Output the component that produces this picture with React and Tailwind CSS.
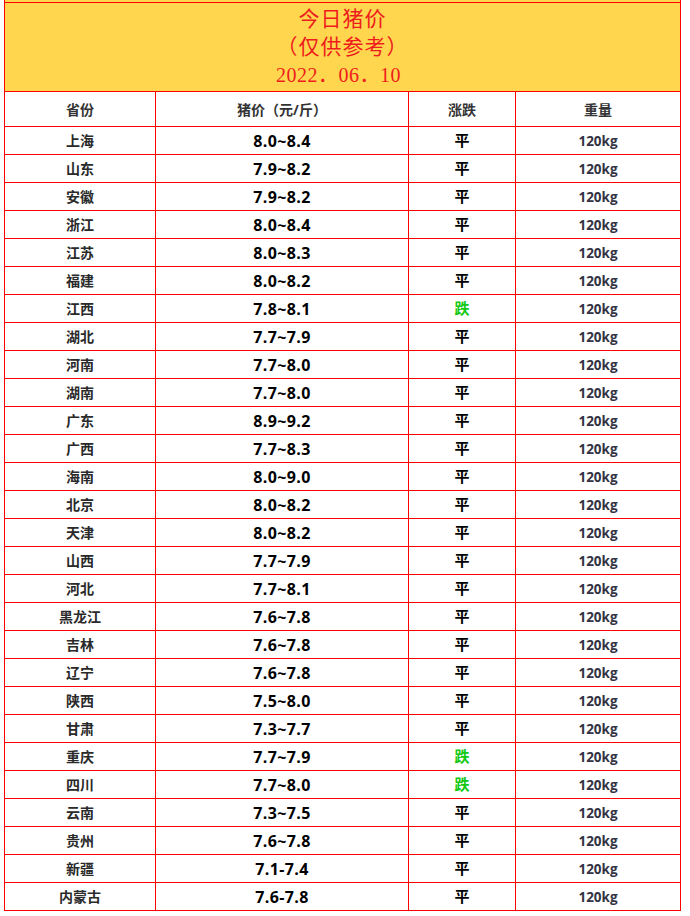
const rows = [
  ['上海', '8.0~8.4', '平'],
  ['山东', '7.9~8.2', '平'],
  ['安徽', '7.9~8.2', '平'],
  ['浙江', '8.0~8.4', '平'],
  ['江苏', '8.0~8.3', '平'],
  ['福建', '8.0~8.2', '平'],
  ['江西', '7.8~8.1', '跌'],
  ['湖北', '7.7~7.9', '平'],
  ['河南', '7.7~8.0', '平'],
  ['湖南', '7.7~8.0', '平'],
  ['广东', '8.9~9.2', '平'],
  ['广西', '7.7~8.3', '平'],
  ['海南', '8.0~9.0', '平'],
  ['北京', '8.0~8.2', '平'],
  ['天津', '8.0~8.2', '平'],
  ['山西', '7.7~7.9', '平'],
  ['河北', '7.7~8.1', '平'],
  ['黑龙江', '7.6~7.8', '平'],
  ['吉林', '7.6~7.8', '平'],
  ['辽宁', '7.6~7.8', '平'],
  ['陕西', '7.5~8.0', '平'],
  ['甘肃', '7.3~7.7', '平'],
  ['重庆', '7.7~7.9', '跌'],
  ['四川', '7.7~8.0', '跌'],
  ['云南', '7.3~7.5', '平'],
  ['贵州', '7.6~7.8', '平'],
  ['新疆', '7.1-7.4', '平'],
  ['内蒙古', '7.6-7.8', '平'],
];

const cols = 'grid grid-cols-[151px_253px_107px_164px] border-b border-[#ff0000]';
const cell = 'flex items-center justify-center border-r border-[#ff0000]';

const App = () => (
  <div className="w-[690px] h-[916px] bg-white">
    <div className="ml-[4px] w-[677px] border-l border-r border-[#ff0000] font-['Open_Sans','Noto_Sans_CJK_SC',sans-serif]">
      <div className="h-[2px] bg-[#ffd64e]" />
      <div className="h-[90px] bg-[#ffd64e] border-t border-b border-[#ff0000] flex flex-col items-center justify-center text-[#ee1c1c] leading-[28px] pb-[1px] font-['Liberation_Serif','Noto_Sans_CJK_SC',serif]">
        <div className="text-[21px] tracking-[1px]">今日猪价</div>
        <div className="text-[21px] tracking-[1px]">（仅供参考）</div>
        <div className="text-[20px] mr-[8px] tracking-[0.5px]">2022．06．10</div>
      </div>
      <div className={`${cols} h-[35px] text-[14px] font-bold text-[#333]`}>
        <div className={cell}>省份</div>
        <div className={cell}>猪价（元/斤）</div>
        <div className={cell}>涨跌</div>
        <div className="flex items-center justify-center">重量</div>
      </div>
      {rows.map(([name, price, trend]) => (
        <div key={name} className={`${cols} h-[28px]`}>
          <div className={`${cell} text-[14px] font-bold text-[#2a2a2a]`}>{name}</div>
          <div className={`${cell} text-[16px] font-bold text-black tracking-[0.4px]`}>{price}</div>
          <div className={`${cell} text-[15px] font-bold ${trend === '跌' ? 'text-[#14c814]' : 'text-black'}`}>{trend}</div>
          <div className="flex items-center justify-center pt-[2px] text-[13.5px] font-bold text-[#333344]">120kg</div>
        </div>
      ))}
    </div>
  </div>
);

export default App;
